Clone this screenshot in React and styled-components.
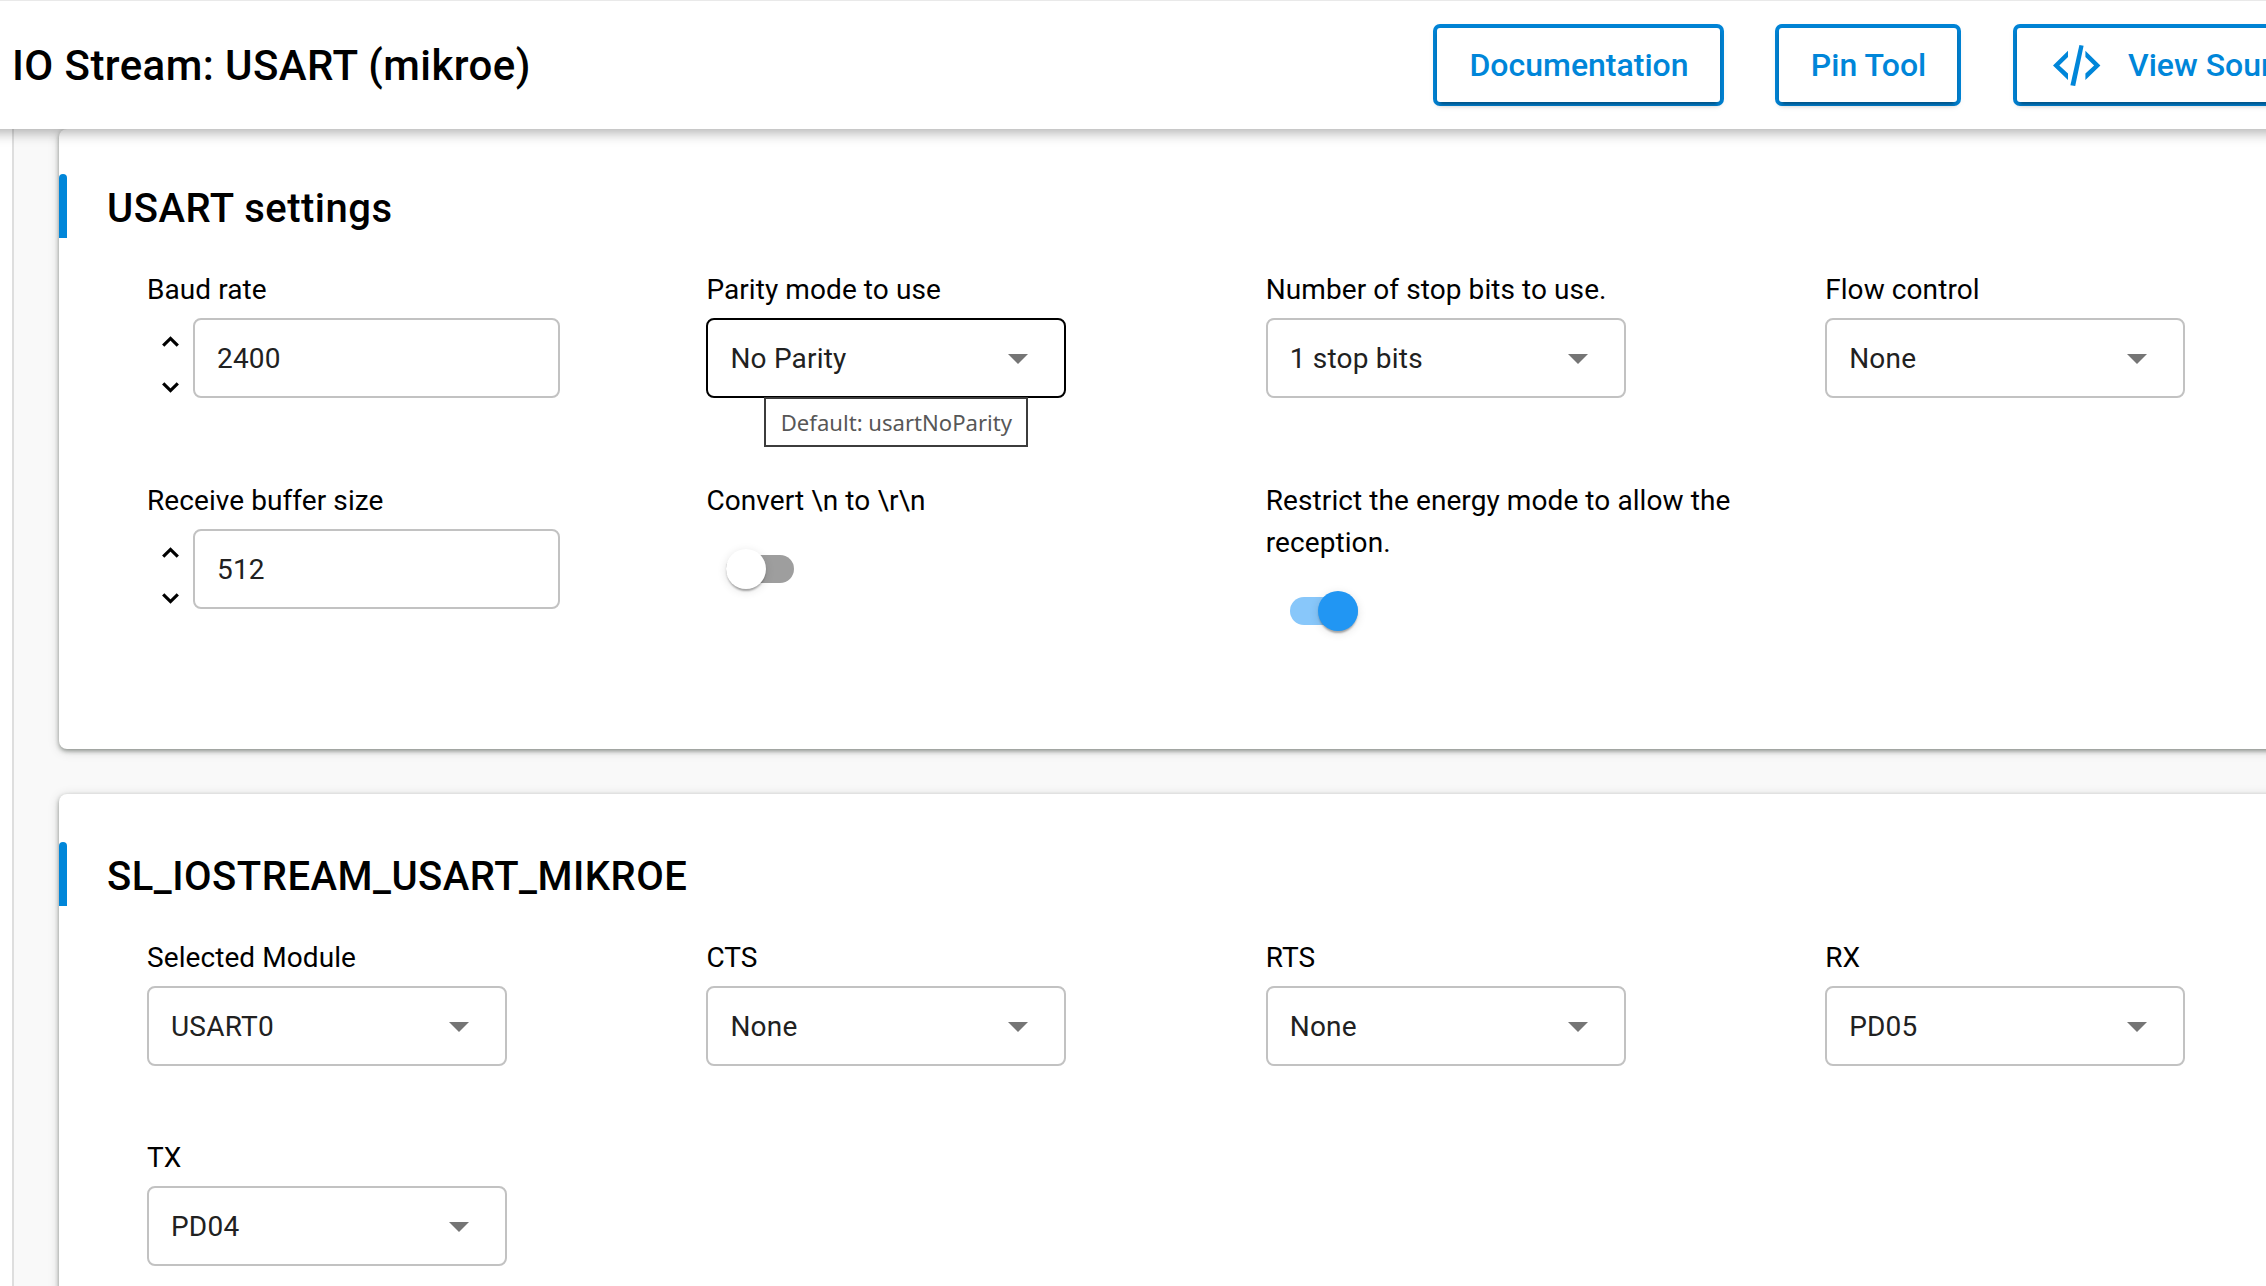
import React from "react";
import styled, { createGlobalStyle } from "styled-components";

const BLUE = "#0086d9";

const GlobalStyle = createGlobalStyle`
  * { box-sizing: border-box; }
  html, body { margin: 0; overflow: hidden; background: #fff; }
  body { font-family: Roboto, "Liberation Sans", sans-serif; color: #000; }
`;

const Page = styled.div`
  display: flex;
  flex-direction: column;
  width: 2266px;
  height: 1286px;
  overflow: hidden;
`;

const Header = styled.header`
  position: relative;
  z-index: 2;
  flex: none;
  display: flex;
  align-items: center;
  width: 2400px;
  height: 129px;
  margin-left: -30px;
  padding-left: 42px;
  border-top: 1px solid #e9e9e9;
  background: #fff;
  box-shadow: 0 4px 12px rgba(0, 0, 0, 0.3);
`;

const Title = styled.h1`
  flex: none;
  width: 1421px;
  margin: 0;
  padding-top: 2px;
  font-size: 42px;
  font-weight: 500;
  line-height: 56px;
  letter-spacing: 0.42px;
  white-space: nowrap;
`;

const Actions = styled.div`
  display: flex;
  flex: none;
  gap: 51px;
`;

const OutlineButton = styled.button`
  display: flex;
  align-items: center;
  justify-content: ${(p) => (p.$withIcon ? "flex-start" : "center")};
  gap: 27px;
  flex: none;
  width: ${(p) => p.$width - 8}px;
  height: 74px;
  margin: 4px 4px 4px ${(p) => (p.$withIcon ? 5 : 4)}px;
  padding: 0 0 0 ${(p) => (p.$withIcon ? 36 : 1)}px;
  border: 0;
  border-radius: 3px;
  background: #fff;
  box-shadow:
    0 6px 2px -4px rgba(0, 0, 0, 0.2),
    0 4px 4px rgba(0, 0, 0, 0.14),
    0 2px 10px rgba(0, 0, 0, 0.12),
    0 0 0 4px ${BLUE};
  color: ${BLUE};
  font: 500 32px Roboto, sans-serif;
  white-space: nowrap;
`;

const Body = styled.main`
  flex: 1;
  display: flex;
  min-height: 0;
`;

const Gutter = styled.div`
  flex: none;
  width: 14px;
  border-right: 2px solid #dedede;
  background: #fff;
`;

const Content = styled.div`
  flex: 1;
  display: flex;
  flex-direction: column;
  gap: 45px;
  padding-left: 45px;
  background: #f9f9f9;
`;

const Card = styled.section`
  flex: none;
  width: 2400px;
  height: ${(p) => p.$height}px;
  padding-top: ${(p) => p.$top}px;
  border-radius: 8px;
  background: #fff;
  box-shadow: 0 2px 4px rgba(40, 50, 40, 0.45), 0 2px 12px rgba(0, 0, 0, 0.16);
`;

const SectionHeader = styled.div`
  display: flex;
  align-items: center;
  gap: 40px;
  height: 64px;
  margin-bottom: 30px;
`;

const Accent = styled.div`
  width: 8px;
  height: 64px;
  border-radius: 4px 4px 0 0;
  background: ${BLUE};
`;

const SectionTitle = styled.h2`
  margin: 0;
  padding-top: 6px;
  font-size: 40px;
  font-weight: 500;
  line-height: 58px;
  letter-spacing: 0.5px;
`;

const Grid = styled.div`
  display: grid;
  grid-template-columns: repeat(4, 559.4px);
  grid-template-rows: ${(p) => p.$row}px auto;
  padding-left: 88px;
`;

const Field = styled.div`
  display: flex;
  flex-direction: column;
  align-items: flex-start;
  position: relative;
`;

const Label = styled.label`
  width: 500px;
  padding-top: 1px;
  margin-bottom: 7px;
  font-size: 28px;
  line-height: 42px;
  letter-spacing: 0.08px;
`;

const Box = styled.div`
  display: flex;
  align-items: center;
  justify-content: space-between;
  width: ${(p) => p.$width || 360}px;
  height: 80px;
  padding: 0 36px 0 22px;
  border: 2px solid ${(p) => (p.$active ? "#000" : "#c2c2c2")};
  border-radius: 8px;
  color: #212121;
  font-size: 28px;
  letter-spacing: 0.2px;
`;

const Caret = styled.span`
  margin-top: 2px;
  border: 10px solid transparent;
  border-top-color: #757575;
  border-bottom: 0;
`;

const NumberRow = styled.div`
  display: flex;
`;

const Stepper = styled.div`
  display: flex;
  flex-direction: column;
  align-items: center;
  justify-content: space-between;
  width: 46px;
  height: 80px;
  padding: 17.5px 0 5.5px;
`;

const Tooltip = styled.div`
  position: absolute;
  left: 58px;
  top: 129px;
  width: 264px;
  height: 50px;
  border: 2px solid #3c3c3c;
  background: #fff;
  color: #575757;
  font: 22.1px/47px "Noto Sans", "Open Sans", sans-serif;
  text-align: center;
  white-space: nowrap;
`;

const Track = styled.div`
  display: flex;
  align-items: center;
  width: 68px;
  height: 28px;
  margin: 26px 0 0 ${(p) => (p.$on ? 24 : 20)}px;
  padding-left: ${(p) => (p.$on ? 28 : 0)}px;
  background: ${(p) => (p.$on ? "#88c7fa" : "#9e9e9e")};
  border-radius: 14px;
`;

const Thumb = styled.div`
  flex: none;
  width: 40px;
  height: 40px;
  border-radius: 50%;
  background: ${(p) => (p.$on ? "#2196f3" : "#fff")};
  box-shadow: 0 4px 2px -2px rgba(0, 0, 0, 0.2), 0 2px 2px rgba(0, 0, 0, 0.14), 0 2px 10px rgba(0, 0, 0, 0.12);
`;

const Chevron = ({ down }) => (
  <svg width="17" height="11" viewBox="0 0 17 11" fill="none" stroke="#000" strokeWidth="3.2">
    <path d={down ? "M1.2 1.4 8.5 8.6l7.3-7.2" : "M1.2 9.6 8.5 2.4l7.3 7.2"} />
  </svg>
);

const CodeIcon = () => (
  <svg width="48" height="41" viewBox="0 0 48 41" fill={BLUE}>
    <path d="M15 5.7v6.3L6.3 20.4l8.7 8.2v6.3L0 20.4z" />
    <path d="M32.4 5.7v6.3l8.7 8.4-8.7 8.2v6.3l15-14.5z" />
    <path d="M26.4 0l4.2.7-8.4 40.3-4.8-.7z" />
  </svg>
);

const Select = ({ label, value, active, tip }) => (
  <Field>
    <Label>{label}</Label>
    <Box $active={active}>
      {value}
      <Caret />
    </Box>
    {tip && <Tooltip>{tip}</Tooltip>}
  </Field>
);

const NumberField = ({ label, value }) => (
  <Field>
    <Label>{label}</Label>
    <NumberRow>
      <Stepper>
        <Chevron />
        <Chevron down />
      </Stepper>
      <Box $width={367}>{value}</Box>
    </NumberRow>
  </Field>
);

const Toggle = ({ label, on }) => (
  <Field>
    <Label>{label}</Label>
    <Track $on={on}>
      <Thumb $on={on} />
    </Track>
  </Field>
);

const Section = ({ title, height, top, row, children }) => (
  <Card $height={height} $top={top}>
    <SectionHeader>
      <Accent />
      <SectionTitle>{title}</SectionTitle>
    </SectionHeader>
    <Grid $row={row}>{children}</Grid>
  </Card>
);

export default function App() {
  return (
    <Page>
      <GlobalStyle />
      <Header>
        <Title>IO Stream: USART (mikroe)</Title>
        <Actions>
          <OutlineButton $width={291}>Documentation</OutlineButton>
          <OutlineButton $width={186}>Pin Tool</OutlineButton>
          <OutlineButton $width={340} $withIcon>
            <CodeIcon />
            View Source
          </OutlineButton>
        </Actions>
      </Header>
      <Body>
        <Gutter />
        <Content>
          <Section title="USART settings" height={620} top={45} row={211}>
            <NumberField label="Baud rate" value="2400" />
            <Select label="Parity mode to use" value="No Parity" active tip="Default: usartNoParity" />
            <Select label="Number of stop bits to use." value="1 stop bits" />
            <Select label="Flow control" value="None" />
            <NumberField label="Receive buffer size" value="512" />
            <Toggle label={"Convert \\n to \\r\\n"} />
            <Toggle label="Restrict the energy mode to allow the reception." on />
          </Section>
          <Section title="SL_IOSTREAM_USART_MIKROE" height={560} top={48} row={200}>
            <Select label="Selected Module" value="USART0" />
            <Select label="CTS" value="None" />
            <Select label="RTS" value="None" />
            <Select label="RX" value="PD05" />
            <Select label="TX" value="PD04" />
          </Section>
        </Content>
      </Body>
    </Page>
  );
}
